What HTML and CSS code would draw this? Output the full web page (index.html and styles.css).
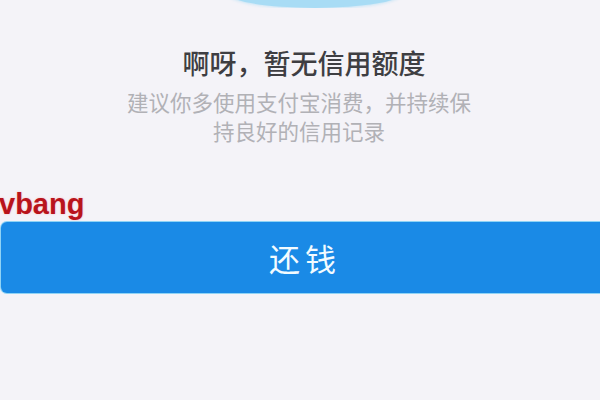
FILE: index.html
```html
<!DOCTYPE html>
<html lang="zh">
<head>
<meta charset="utf-8">
<link rel="stylesheet" href="styles.css">
</head>
<body>
<div class="page">
  <div class="hero"><div class="blob"></div></div>
  <h1 class="title">啊呀，暂无信用额度</h1>
  <p class="desc">建议你多使用支付宝消费，并持续保持良好的信用记录</p>
  <div class="mark">vbang</div>
  <div class="btn">还钱</div>
</div>
</body>
</html>
```
FILE: styles.css
```css
html, body {
  margin: 0;
  padding: 0;
  background: #f4f3f8;
}
.page {
  width: 600px;
  height: 400px;
  overflow: hidden;
  font-family: "Noto Sans CJK SC", "Noto Sans", sans-serif;
  display: flex;
  flex-direction: column;
}
.hero {
  height: 8px;
  display: flex;
  align-items: flex-end;
  overflow: hidden;
  padding-left: 228px;
}
.blob {
  flex: none;
  width: 174px;
  height: 30px;
  border-radius: 50%;
  background: #a8dcf5;
  box-shadow: 0 1px 3px rgba(168, 220, 245, 0.6);
}
.title {
  margin: 37px 0 0;
  text-align: center;
  font-size: 27px;
  line-height: 36px;
  font-weight: 500;
  color: #3e3e42;
  padding-left: 8px;
}
.desc {
  margin: 6px auto 0;
  width: 350px;
  text-align: center;
  font-size: 21.5px;
  line-height: 29px;
  color: #b1b1b6;
  padding-right: 2px;
}
.mark {
  margin-top: 44px;
  font-family: "Liberation Sans", Arial, sans-serif;
  font-weight: bold;
  font-size: 29px;
  line-height: 30px;
  color: #b8141c;
  margin-left: -1px;
  text-shadow: 0 0 2px rgba(255, 120, 120, 0.5);
}
.btn {
  margin: 3px 0 0 1px;
  height: 71px;
  border-radius: 6px 0 0 6px;
  background: #1a8ae6;
  box-shadow: 0 0 0 1px #8fd3f5;
  color: #f2fbff;
  font-size: 31px;
  letter-spacing: 5px;
  display: flex;
  align-items: center;
  justify-content: center;
  padding-left: 9px;
}
```
